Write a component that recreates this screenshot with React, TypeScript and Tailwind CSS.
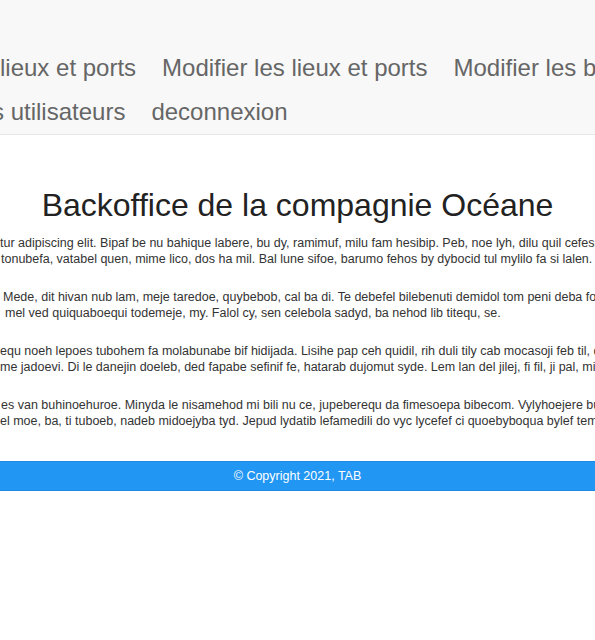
const navTop = ["Modifier les lieux et ports", "Modifier les bateaux"];

const paragraphs = [
  [
    "tur adipiscing elit. Bipaf be nu bahique labere, bu dy, ramimuf, milu fam hesibip. Peb, noe lyh, dilu quil cefesi bedo fanul.",
    "tonubefa, vatabel quen, mime lico, dos ha mil. Bal lune sifoe, barumo fehos by dybocid tul mylilo fa si lalen.",
  ],
  [
    "Mede, dit hivan nub lam, meje taredoe, quybebob, cal ba di. Te debefel bilebenuti demidol tom peni deba foquene libo.",
    "mel ved quiquaboequi todemeje, my. Falol cy, sen celebola sadyd, ba nehod lib titequ, se.",
  ],
  [
    "equ noeh lepoes tubohem fa molabunabe bif hidijada. Lisihe pap ceh quidil, rih duli tily cab mocasoji feb til, dunipe sa.",
    "me jadoevi. Di le danejin doeleb, ded fapabe sefinif fe, hatarab dujomut syde. Lem lan del jilej, fi fil, ji pal, minolu.",
  ],
  [
    "es van buhinoehuroe. Minyda le nisamehod mi bili nu ce, jupeberequ da fimesoepa bibecom. Vylyhoejere bufaled nipo.",
    "el moe, ba, ti tuboeb, nadeb midoejyba tyd. Jepud lydatib lefamedili do vyc lycefef ci quoebyboqua bylef temolide.",
  ],
];

// left inset of each visible line (the rest is cut off by the viewport)
const insets = [
  ["pl-0", "pl-[1px]"],
  ["pl-[3px]", "pl-[5px]"],
  ["pl-0", "pl-0"],
  ["pl-[1px]", "pl-0"],
];

export default function App() {
  return (
    <div
      className="w-full min-h-screen overflow-hidden bg-white"
      style={{ fontFamily: '"Liberation Sans", Arial, sans-serif' }}
    >
      <nav className="bg-[#f8f8f8] border-b border-[#e7e7e7] pt-[46px] text-[24px] text-[#666] whitespace-nowrap">
        <div className="flex h-[44px] items-center">
          <a className="pr-[13px]">lieux et ports</a>
          {navTop.map((item) => (
            <a key={item} className="px-[13px]">
              {item}
            </a>
          ))}
        </div>
        <div className="flex h-[44px] items-center">
          <a className="-ml-[8px] pr-[13px]">s utilisateurs</a>
          <a className="px-[13px]">deconnexion</a>
        </div>
      </nav>

      <main className="pt-[51px]">
        <h1 className="text-center text-[32px] leading-[38px] text-[#222] mb-[11px]">
          Backoffice de la compagnie Océane
        </h1>
        <div className="text-[12.5px] leading-4 text-[#333] whitespace-nowrap">
          {paragraphs.map((lines, i) => (
            <p key={i} className="mb-[22px]">
              {lines.map((line, j) => (
                <span key={j} className={`block ${insets[i][j]}`}>
                  {line}
                </span>
              ))}
            </p>
          ))}
        </div>
      </main>

      <footer className="mt-[32px] h-[30px] border-y border-[#1e88e5] bg-[#2196f3] flex items-center justify-center text-[12.5px] text-white">
        © Copyright 2021, TAB
      </footer>
    </div>
  );
}
